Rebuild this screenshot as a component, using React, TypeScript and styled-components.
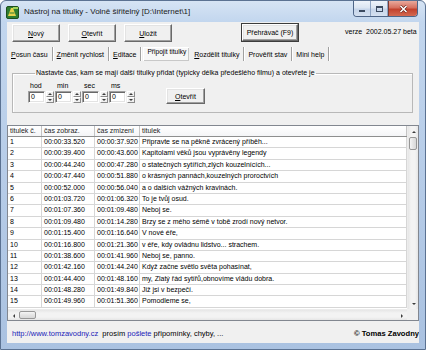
import React from 'react';
import styled, { createGlobalStyle } from 'styled-components';

const GlobalStyle = createGlobalStyle`
  html, body {
    margin: 0;
    padding: 0;
    background: #ffffff;
  }
  body {
    font-family: "Liberation Sans", Arial, sans-serif;
    font-size: 7px;
    color: #000000;
  }
  * {
    box-sizing: border-box;
  }
`;

const rows = [
  ['1', '00:00:33.520', '00:00:37.920', 'Připravte se na pěkně zvrácený příběh...'],
  ['2', '00:00:39.400', '00:00:43.600', 'Kapitolami věků jsou vyprávěny legendy'],
  ['3', '00:00:44.240', '00:00:47.280', 'o statečných sytířích,zlých kouzelnících...'],
  ['4', '00:00:47.440', '00:00:51.880', 'o krásných pannách,kouzelných proroctvích'],
  ['5', '00:00:52.000', '00:00:56.040', 'a o dalších vážných kravinách.'],
  ['6', '00:01:03.720', '00:01:06.320', 'To je tvůj osud.'],
  ['7', '00:01:07.360', '00:01:09.480', 'Neboj se.'],
  ['8', '00:01:09.480', '00:01:14.280', 'Brzy se z mého sémě v tobě zrodí nový netvor.'],
  ['9', '00:01:15.400', '00:01:16.640', 'V nové éře,'],
  ['10', '00:01:16.800', '00:01:21.360', 'v éře, kdy ovládnu lidstvo... strachem.'],
  ['11', '00:01:38.600', '00:01:41.960', 'Neboj se, panno.'],
  ['12', '00:01:42.160', '00:01:44.240', 'Když začne světlo světa pohasínat,'],
  ['13', '00:01:44.400', '00:01:48.160', 'my, Zlatý řád sytířů,obnovíme vládu dobra.'],
  ['14', '00:01:48.280', '00:01:49.840', 'Již jsi v bezpečí.'],
  ['15', '00:01:49.960', '00:01:51.360', 'Pomodleme se,'],
];

const tabs = [
  { key: 'P', rest: 'osun času' },
  { key: 'Z', rest: 'měnit rychlost' },
  { key: 'E', rest: 'ditace' },
  { key: '', rest: 'Připojit titulky', active: true },
  { key: 'R', rest: 'ozdělit titulky' },
  { key: '', rest: 'Prověřit stav' },
  { key: '', rest: 'Mini help' },
];

const timeUnits = ['hod', 'min', 'sec', 'ms'];

/* window frame */

const Window = styled.div`
  width: 426px;
  height: 350px;
  display: flex;
  flex-direction: column;
  padding: 0 6px 6px 6px;
  border: 1px solid #5b7292;
  border-radius: 6px 6px 0 0;
  background: linear-gradient(180deg, #d6e4f4 0px, #c2d6ee 21px, #b5cbe7 55%, #aac2e1 100%);
  overflow: hidden;
`;

const TitleBar = styled.div`
  height: 21px;
  margin: 0 -6px;
  padding-left: 5px;
  display: flex;
  align-items: center;
  flex-shrink: 0;
`;

const Title = styled.span`
  margin-left: 5px;
  font-size: 8px;
  color: #1a1a1a;
  margin-top: -1px;
`;

const Captions = styled.div`
  margin-left: auto;
  margin-right: 7px;
  align-self: flex-start;
  display: flex;
  height: 16px;
  border: 1px solid #4e6587;
  border-top: none;
  border-radius: 0 0 4px 4px;
  overflow: hidden;
`;

const CaptionButton = styled.div<{ $close?: boolean }>`
  width: ${({ $close }) => ($close ? '29px' : '17px')};
  height: 100%;
  display: flex;
  align-items: center;
  justify-content: center;
  border-left: ${({ $close }) => ($close ? '1px solid #7a3a33' : 'none')};
  border-right: ${({ $close }) => ($close ? 'none' : '1px solid #8ea4c3')};
  background: ${({ $close }) =>
    $close
      ? 'linear-gradient(180deg, #e9a99c 0%, #d6705f 45%, #c2412d 55%, #d36a52 100%)'
      : 'linear-gradient(180deg, #eef3fa 0%, #dbe5f2 45%, #c6d5ea 55%, #d4e0f0 100%)'};
`;

const MinGlyph = styled.span`
  width: 6px;
  height: 2px;
  margin-top: 4px;
  background: #3b4a60;
`;

const MaxGlyph = styled.span`
  width: 7px;
  height: 6px;
  border: 1px solid #3b4a60;
  border-top-width: 2px;
`;

/* client area */

const Client = styled.div`
  flex: 1;
  display: flex;
  flex-direction: column;
  background: #f0f0f0;
  overflow: hidden;
  min-height: 0;
`;

const Toolbar = styled.div`
  display: flex;
  align-items: flex-start;
  padding: 2px 0 0 5px;
  height: 21px;
  flex-shrink: 0;
`;

const Button = styled.div<{ $w: number; $h?: number; $default?: boolean }>`
  width: ${({ $w }) => $w}px;
  height: ${({ $h }) => $h ?? 18}px;
  display: flex;
  align-items: center;
  justify-content: center;
  background: #f0f0f0;
  font-size: 7px;
  color: #000;
  border: 1px solid;
  border-color: #ffffff #696969 #696969 #ffffff;
  box-shadow: inset -1px -1px 0 #a0a0a0, inset 1px 1px 0 #e3e3e3
    ${({ $default }) => ($default ? ', 0 0 0 1px #3c3c3c' : '')};
`;

const ToolGap = styled.div<{ $w: number }>`
  width: ${({ $w }) => $w}px;
  flex-shrink: 0;
`;

const Version = styled.span`
  margin-left: 47px;
  padding-top: 4px;
  white-space: nowrap;
`;

const U = styled.span`
  text-decoration: underline;
`;

const TabRow = styled.div`
  display: flex;
  align-items: stretch;
  height: 14px;
  margin-top: 4px;
  padding-left: 0;
  flex-shrink: 0;
`;

const Tab = styled.div<{ $active?: boolean }>`
  display: flex;
  align-items: ${({ $active }) => ($active ? 'flex-start' : 'center')};
  padding: ${({ $active }) => ($active ? '1px 3px 0 4px' : '0 4px 0 2px')};
  margin-right: ${({ $active }) => ($active ? '1px' : '0')};
  white-space: nowrap;
  background: ${({ $active }) => ($active ? '#f7f7f7' : 'transparent')};
  font-size: ${({ $active }) => ($active ? '6.6px' : '7px')};
  border-right: ${({ $active }) => ($active ? 'none' : '1px solid #a0a0a0')};
  box-shadow: ${({ $active }) =>
    $active ? 'inset 1px 1px 0 #ffffff, inset -1px -1px 0 #c8c8c8' : '1px 0 0 #ffffff'};
  margin-left: 2px;
`;

/* group box */

const Group = styled.fieldset`
  margin: 8px 6px 0 5px;
  padding: 0 0 9px 15px;
  border: 1px solid #b8b8b8;
  box-shadow: inset 1px 1px 0 #ffffff;
  min-width: 0;
  flex-shrink: 0;
`;

const Legend = styled.legend`
  margin-left: 7px;
  padding: 0 1px;
  line-height: 8px;
  font-size: 7px;
`;

const TimeRow = styled.div`
  display: flex;
  align-items: flex-end;
  gap: 1px;
  margin-top: 4px;
`;

const TimeField = styled.div`
  display: flex;
  flex-direction: column;
`;

const TimeLabel = styled.span`
  height: 10px;
  line-height: 9px;
  padding-left: 2px;
`;

const SpinPair = styled.div`
  display: flex;
  gap: 1px;
`;

const Edit = styled.div`
  width: 17px;
  height: 12px;
  background: #ffffff;
  border: 1px solid;
  border-color: #a0a0a0 #ffffff #ffffff #a0a0a0;
  box-shadow: inset 1px 1px 0 #696969, inset -1px -1px 0 #e3e3e3;
  padding-left: 2px;
  line-height: 10px;
`;

const Spin = styled.div`
  width: 8px;
  height: 12px;
  display: flex;
  flex-direction: column;
`;

const SpinHalf = styled.div`
  flex: 1;
  display: flex;
  align-items: center;
  justify-content: center;
  background: #f0f0f0;
  border: 1px solid;
  border-color: #ffffff #8a8a8a #8a8a8a #ffffff;
`;

const Arrow = styled.span<{ $dir: 'up' | 'down' | 'left' | 'right'; $s?: number }>`
  width: 0;
  height: 0;
  border-style: solid;
  border-color: transparent;
  border-width: ${({ $s = 2 }) => $s}px;
  ${({ $dir }) => {
    const c = '#3c3c3c';
    if ($dir === 'up') return `border-bottom-color: ${c}; border-top-width: 0;`;
    if ($dir === 'down') return `border-top-color: ${c}; border-bottom-width: 0;`;
    if ($dir === 'left') return `border-right-color: ${c}; border-left-width: 0;`;
    return `border-left-color: ${c}; border-right-width: 0;`;
  }}
`;

const OpenGap = styled.div`
  width: 29px;
`;

/* list view */

const List = styled.div`
  flex: 1;
  min-height: 0;
  margin-top: 12px;
  display: grid;
  grid-template-columns: 1fr 11px;
  grid-template-rows: 1fr 11px;
  border: 1px solid #828790;
  background: #ffffff;
`;

const Table = styled.div`
  overflow: hidden;
  min-width: 0;
`;

const COLS = '34px 53px 45px 1fr';

const HeaderRow = styled.div`
  display: grid;
  grid-template-columns: ${COLS};
  height: 11px;
  background: linear-gradient(180deg, #ffffff 0%, #f4f5f7 100%);
  border-bottom: 1px solid #8e8f8f;
`;

const HeaderCell = styled.div`
  padding-left: 2px;
  line-height: 10px;
  border-right: 1px solid #c4c4c4;
  white-space: nowrap;
  overflow: hidden;
  color: #1e1e1e;
`;

const Row = styled.div`
  display: grid;
  grid-template-columns: ${COLS};
  height: 11.4px;
  border-bottom: 1px solid #d6d6d6;
`;

const Cell = styled.div`
  padding-left: 2px;
  line-height: 10.4px;
  border-right: 1px solid #d6d6d6;
  white-space: nowrap;
  overflow: hidden;
`;

const VScroll = styled.div`
  display: flex;
  flex-direction: column;
  background: linear-gradient(90deg, #e6e6e6 0%, #f3f3f3 30%, #f3f3f3 70%, #e6e6e6 100%);
  border-left: 1px solid #ececec;
`;

const HScroll = styled.div`
  display: flex;
  align-items: stretch;
  background: linear-gradient(180deg, #e6e6e6 0%, #f3f3f3 30%, #f3f3f3 70%, #e6e6e6 100%);
  border-top: 1px solid #ececec;
`;

const ScrollArrow = styled.div`
  width: 11px;
  height: 11px;
  flex-shrink: 0;
  display: flex;
  align-items: center;
  justify-content: center;
`;

const Thumb = styled.div<{ $horizontal?: boolean }>`
  ${({ $horizontal }) => ($horizontal ? 'width: 17px; margin: 1px 0;' : 'height: 13px; margin: 0 1px;')}
  flex-shrink: 0;
  border: 1px solid #979797;
  border-radius: 2px;
  background: ${({ $horizontal }) =>
    $horizontal
      ? 'linear-gradient(180deg, #f5f5f5 0%, #e4e4e4 50%, #d8d8d8 100%)'
      : 'linear-gradient(90deg, #f5f5f5 0%, #e4e4e4 50%, #d8d8d8 100%)'};
`;

const Fill = styled.div`
  flex: 1;
`;

const Corner = styled.div`
  background: #f0f0f0;
`;

/* status line */

const Status = styled.div`
  height: 22px;
  flex-shrink: 0;
  display: flex;
  align-items: center;
  padding: 3px 0 0 5px;
  font-size: 7.5px;
  white-space: nowrap;
`;

const Link = styled.span`
  color: #1b1bb8;
`;

const Copyright = styled.span`
  margin-left: auto;
  margin-right: 0;
  font-size: 7.6px;
  font-weight: bold;
  flex-shrink: 0;
`;

const AppIcon = () => (
  <svg width="13" height="14" viewBox="0 0 13 14">
    <rect x="0.5" y="1.5" width="12" height="12" rx="1.5" fill="#2f7d2f" stroke="#1d4f1d" />
    <path d="M2 11 L5 3 L7 3 L10 11 Z" fill="#e6d24a" />
    <path d="M3.5 8 H8.5" stroke="#2f7d2f" strokeWidth="1.2" />
    <rect x="7" y="2" width="5" height="2" fill="#9fd35a" />
  </svg>
);

const CloseGlyph = () => (
  <svg width="9" height="8" viewBox="0 0 9 8">
    <path d="M1.5 1 L7.5 7 M7.5 1 L1.5 7" stroke="#5a1a12" strokeWidth="2.6" />
    <path d="M1.5 1 L7.5 7 M7.5 1 L1.5 7" stroke="#ffffff" strokeWidth="1.6" />
  </svg>
);

export default function App() {
  return (
    <>
      <GlobalStyle />
      <Window>
        <TitleBar>
          <AppIcon />
          <Title>{'Nástroj na titulky - Volně šiřitelný [D:\\Internet\\1]'}</Title>
          <Captions>
            <CaptionButton>
              <MinGlyph />
            </CaptionButton>
            <CaptionButton>
              <MaxGlyph />
            </CaptionButton>
            <CaptionButton $close>
              <CloseGlyph />
            </CaptionButton>
          </Captions>
        </TitleBar>

        <Client>
          <Toolbar>
            <Button $w={48}>
              <span><U>N</U>ový</span>
            </Button>
            <ToolGap $w={8} />
            <Button $w={48}>
              <span><U>O</U>tevřít</span>
            </Button>
            <ToolGap $w={8} />
            <Button $w={48}>
              <span><U>U</U>ložit</span>
            </Button>
            <ToolGap $w={70} />
            <Button $w={56} $h={17} $default>
              Přehrávač (F9)
            </Button>
            <Version>verze&nbsp; 2002.05.27 beta</Version>
          </Toolbar>

          <TabRow>
            {tabs.map((t) => (
              <Tab key={t.rest} $active={t.active}>
                <span>
                  {t.key && <U>{t.key}</U>}
                  {t.rest}
                </span>
              </Tab>
            ))}
          </TabRow>

          <Group>
            <Legend>
              Nastavte čas, kam se mají další titulky přidat (typicky délka předešlého filmu) a otevřete je
            </Legend>
            <TimeRow>
              {timeUnits.map((u) => (
                <TimeField key={u}>
                  <TimeLabel>{u}</TimeLabel>
                  <SpinPair>
                    <Edit>0</Edit>
                    <Spin>
                      <SpinHalf>
                        <Arrow $dir="up" />
                      </SpinHalf>
                      <SpinHalf>
                        <Arrow $dir="down" />
                      </SpinHalf>
                    </Spin>
                  </SpinPair>
                </TimeField>
              ))}
              <OpenGap />
              <Button $w={39} $h={16} style={{ marginBottom: '-1px' }}>
                <span><U>O</U>tevřít</span>
              </Button>
            </TimeRow>
          </Group>

          <List>
            <Table>
              <HeaderRow>
                <HeaderCell>titulek č.</HeaderCell>
                <HeaderCell>čas zobraz.</HeaderCell>
                <HeaderCell>čas zmizení</HeaderCell>
                <HeaderCell>titulek</HeaderCell>
              </HeaderRow>
              {rows.map((r) => (
                <Row key={r[0]}>
                  {r.map((c, i) => (
                    <Cell key={i}>{c}</Cell>
                  ))}
                </Row>
              ))}
            </Table>
            <VScroll>
              <ScrollArrow>
                <Arrow $dir="up" />
              </ScrollArrow>
              <Thumb />
              <Fill />
              <ScrollArrow>
                <Arrow $dir="down" />
              </ScrollArrow>
            </VScroll>
            <HScroll>
              <ScrollArrow>
                <Arrow $dir="left" />
              </ScrollArrow>
              <Thumb $horizontal />
              <Fill />
              <ScrollArrow>
                <Arrow $dir="right" />
              </ScrollArrow>
            </HScroll>
            <Corner />
          </List>

          <Status>
            <Link>http://www.tomzavodny.cz</Link>
            &nbsp; prosím&nbsp;<Link>pošlete</Link>&nbsp;připomínky, chyby, ...
            <Copyright>© Tomas Zavodny</Copyright>
          </Status>
        </Client>
      </Window>
    </>
  );
}
